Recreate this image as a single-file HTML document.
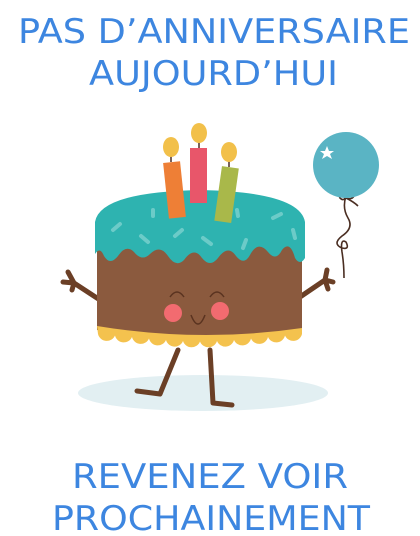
<!DOCTYPE html>
<html><head><meta charset="utf-8"><style>
html,body{margin:0;padding:0;background:#fff;width:420px;height:536px;overflow:hidden}
</style></head><body>
<svg width="420" height="536" viewBox="0 0 420 536" xmlns="http://www.w3.org/2000/svg">
<g font-family="'DejaVu Sans','Liberation Sans',sans-serif" font-size="34" fill="#3d86e0">
<text x="18" y="43" textLength="392" lengthAdjust="spacingAndGlyphs">PAS D’ANNIVERSAIRE</text>
<text x="89" y="85" textLength="249" lengthAdjust="spacingAndGlyphs">AUJOURD’HUI</text>
<text x="72" y="488" textLength="276" lengthAdjust="spacingAndGlyphs">REVENEZ VOIR</text>
<text x="52" y="530" textLength="318" lengthAdjust="spacingAndGlyphs">PROCHAINEMENT</text>
</g>
<ellipse cx="203" cy="393" rx="125" ry="18" fill="#e2eff2"/>
<!-- balloon string -->
<path d="M346 196 q-4 12 2 22 q6 10 -6 18 q-10 8 0 12 q8 2 4 -6 q-6 -4 -4 10 q2 12 2 26" stroke="#4a2e22" stroke-width="1.6" fill="none"/>
<path d="M346 196 q-10 -6 -6 2 q4 4 6 -2 q6 -6 8 0 q-2 4 -8 2 q8 4 12 8" stroke="#4a2e22" stroke-width="1.6" fill="none"/>
<circle cx="346" cy="165" r="33" fill="#5ab4c4"/>
<polygon points="327,146 329,151 334,151 330,154 332,159 327,156 322,159 324,154 320,151 325,151" fill="#fff"/>
<!-- legs -->
<path d="M178 350 L160 394 L137 391" stroke="#6b3f26" stroke-width="5" fill="none" stroke-linecap="round" stroke-linejoin="round"/>
<path d="M210 350 L213 403 L232 405" stroke="#6b3f26" stroke-width="5" fill="none" stroke-linecap="round" stroke-linejoin="round"/>
<!-- arms -->
<path d="M100 300 L74 283 M74 283 L68 272 M74 283 L63 282 M74 283 L72 290" stroke="#6b3f26" stroke-width="5" fill="none" stroke-linecap="round"/>
<path d="M300 297 L325 280 M325 280 L327 270 M325 280 L333 282 M325 280 L328 289" stroke="#6b3f26" stroke-width="5" fill="none" stroke-linecap="round"/>
<!-- cake body -->
<path d="M97 245 L302 245 L302 332 Q200 346 97 330 Z" fill="#8b5a3e"/>
<path d="M97 326 Q200 343 302 328 L302 334 a9 9 0 0 1 -17 1.5 a9 9 0 0 1 -17 1.5 a9 9 0 0 1 -17 1.5 a9 9 0 0 1 -17 1.5 a9 9 0 0 1 -17 1 a9 9 0 0 1 -17 0.5 a9 9 0 0 1 -17 -0.5 a9 9 0 0 1 -17 -1 a9 9 0 0 1 -17 -1.5 a9 9 0 0 1 -17 -1.5 a9 9 0 0 1 -17 -1.5 a9 9 0 0 1 -17 -1.5 Z" fill="#f4c24e"/>
<!-- frosting -->
<path d="M95 222 Q100 192 200 190 Q300 192 305 222 L305 258 Q300 266 295 258 Q290 240 282 250 Q276 262 268 252 Q258 240 250 255 Q244 266 236 256 Q228 244 218 258 Q210 268 202 258 Q194 246 184 260 Q176 268 168 256 Q160 244 150 254 Q142 262 134 252 Q126 244 118 256 Q110 266 104 256 Q100 246 95 254 Z" fill="#2eb3b0"/>
<g stroke="#6ccbc8" stroke-width="4" stroke-linecap="round">
<line x1="113" y1="230" x2="120" y2="224"/><line x1="141" y1="236" x2="148" y2="242"/>
<line x1="175" y1="236" x2="182" y2="230"/><line x1="203" y1="238" x2="211" y2="244"/>
<line x1="246" y1="240" x2="243" y2="248"/><line x1="273" y1="218" x2="281" y2="214"/>
<line x1="293" y1="230" x2="295" y2="238"/><line x1="153" y1="210" x2="153" y2="216"/>
<line x1="237" y1="210" x2="238" y2="216"/>
</g>
<!-- candles -->
<line x1="171" y1="148" x2="171" y2="162" stroke="#4a2e22" stroke-width="1.5"/>
<line x1="199" y1="134" x2="199" y2="148" stroke="#4a2e22" stroke-width="1.5"/>
<line x1="229" y1="153" x2="229" y2="167" stroke="#4a2e22" stroke-width="1.5"/>
<g transform="rotate(-6 174 190)"><rect x="166" y="162" width="17" height="56" fill="#ee7f36"/></g>
<rect x="190" y="148" width="17" height="55" fill="#e8566a"/>
<g transform="rotate(8 226 195)"><rect x="218" y="167" width="17" height="55" fill="#a9b84a"/></g>
<ellipse cx="171" cy="147" rx="8" ry="10" fill="#f2c04a"/>
<ellipse cx="199" cy="133" rx="8" ry="10" fill="#f2c04a"/>
<ellipse cx="229" cy="152" rx="8" ry="10" fill="#f2c04a"/>
<!-- face -->
<path d="M170 297 q7 -10 14 0 M210 297 q7 -10 14 0" stroke="#5a3320" stroke-width="1.5" fill="none"/>
<circle cx="173" cy="313" r="9" fill="#f26b70"/>
<circle cx="220" cy="311" r="9" fill="#f26b70"/>
<path d="M191 315 q7 18 14 0" stroke="#5a3320" stroke-width="1.5" fill="none"/>
</svg>
</body></html>
